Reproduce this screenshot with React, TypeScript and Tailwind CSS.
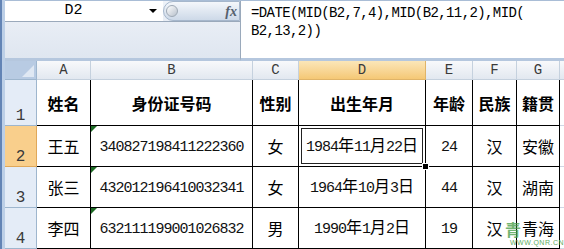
import React from "react";

const header = ["姓名", "身份证号码", "性别", "出生年月", "年龄", "民族", "籍贯"];
const rows = [
  ["王五", "340827198411222360", "女", "1984年11月22日", "24", "汉", "安徽"],
  ["张三", "432012196410032341", "女", "1964年10月3日", "44", "汉", "湖南"],
  ["李四", "632111199001026832", "男", "1990年1月2日", "19", "汉", "青海"],
];
const letters = ["A", "B", "C", "D", "E", "F", "G"];

// digits in a narrow mono face, CJK at full width
function Mixed({ text }: { text: string }) {
  const parts = text.split(/([\x00-\x7f]+)/).filter(Boolean);
  return (
    <span className="whitespace-nowrap">
      {parts.map((p, i) =>
        /^[\x00-\x7f]+$/.test(p) ? (
          <span key={i} className="font-['Liberation_Mono',monospace] text-[15px] tracking-[-1px] text-[#111]">
            {p}
          </span>
        ) : (
          <span key={i} className="font-['Noto_Sans_CJK_SC',sans-serif] text-[16px]">
            {p}
          </span>
        )
      )}
    </span>
  );
}

function FormulaBar() {
  return (
    <div className="flex h-[61px] border-t border-[#a9bdd6]">
      <div className="flex w-[235px] flex-col bg-gradient-to-b from-[#eef2f8] to-[#dfe6f0] border-b-[3px] border-[#b5c7de]">
        <div className="flex h-[21px] border-b border-[#9aa9bb]">
          <div className="flex w-[137px] items-center justify-center bg-white font-['Liberation_Mono',monospace] text-[15px] text-black">
            D2
          </div>
          <div className="flex w-[21px] items-center justify-center bg-white">
            <span className="h-0 w-0 border-x-[4px] border-t-[4px] border-x-transparent border-t-black" />
          </div>
          <div className="flex flex-1 items-center rounded-l-full border border-[#a6b7cc] bg-gradient-to-b from-[#f4f7fb] to-[#cdd9e8]">
            <span className="ml-[2px] h-[12px] w-[12px] rounded-full border border-[#9fa9b5] bg-gradient-to-br from-[#ffffff] to-[#b8c1cc]" />
            <span className="ml-auto mr-[2px] font-['Liberation_Serif',serif] text-[14px] italic font-bold text-[#55606e]">
              fx
            </span>
          </div>
        </div>
        <div className="flex-1" />
      </div>
      <div className="flex-1 border-l border-[#9aa9bb] bg-white pl-[10px] pt-[3px] font-['Liberation_Mono',monospace] text-[14px] tracking-[-0.6px] leading-[18px] text-black border-b-[3px] border-b-[#b5c7de]">
        <div>=DATE(MID(B2,7,4),MID(B2,11,2),MID(</div>
        <div>B2,13,2))</div>
      </div>
    </div>
  );
}

export default function App() {
  return (
    <div className="relative flex h-[249px] w-[564px] overflow-hidden bg-white">
      <div className="w-[5px] shrink-0 border-l-[2px] border-[#6384b5] bg-[#bccfe7]" />
      <div className="flex flex-1 flex-col">
        <FormulaBar />
        <div className="grid grid-cols-[32px_54px_162px_46px_127px_47px_44px_43px_1fr] grid-rows-[19px_46px_41px_41px_41px]">
          {/* column headers */}
          <div className="relative border-b border-r border-[#9eb6ce] bg-[#b8cbe3]">
            <span className="absolute bottom-[2px] right-[2px] h-0 w-0 border-l-[12px] border-t-[12px] border-l-transparent border-t-transparent border-b-0 border-r-0 [border-bottom:12px_solid_#dfe8f3]" />
          </div>
          {letters.map((l) => (
            <div
              key={l}
              className={`flex items-center justify-center border-b border-r font-['Liberation_Mono',monospace] text-[14px] text-[#3a3a3a] ${
                l === "D"
                  ? "border-[#e0b468] bg-gradient-to-b from-[#fbe6b8] to-[#f5c875]"
                  : "border-[#c5d1de] bg-gradient-to-b from-[#f8f9fb] to-[#e2e8f0]"
              }`}
            >
              {l}
            </div>
          ))}
          <div className="border-b border-[#c5d1de] bg-gradient-to-b from-[#f8f9fb] to-[#e2e8f0]" />

          {/* row 1 */}
          <div className="flex items-end justify-center border-b border-r border-[#9eb6ce] bg-[#e4ecf7] font-['Liberation_Mono',monospace] text-[16px] leading-[17px] text-[#3a3a3a]">
            1
          </div>
          {header.map((h) => (
            <div
              key={h}
              className="flex items-center justify-center border-b border-r border-black font-['Noto_Sans_CJK_SC',sans-serif] text-[16px] font-bold text-black"
            >
              {h}
            </div>
          ))}
          <div className="border-b border-[#d0d7e5]" />

          {rows.map((r, ri) => (
            <React.Fragment key={ri}>
              <div
                className={`flex items-end justify-center border-b border-r font-['Liberation_Mono',monospace] text-[16px] leading-[17px] text-[#3a3a3a] ${
                  ri === 0
                    ? "border-[#e0a85a] bg-[#f9cf8c]"
                    : "border-[#9eb6ce] bg-[#e4ecf7]"
                }`}
              >
                {ri + 2}
              </div>
              {r.map((c, ci) => (
                <div
                  key={ci}
                  className="relative flex items-center justify-center border-b border-r border-black text-black"
                >
                  {ci === 1 && (
                    <span className="absolute left-0 top-0 h-0 w-0 border-r-[6px] border-t-[6px] border-r-transparent border-t-[#1d6b25]" />
                  )}
                  {ri === 0 && ci === 3 && (
                    <>
                      <span className="absolute -inset-[1px] border border-black" />
                      <span className="absolute inset-[2px] border border-[#222]" />
                      <span className="absolute -bottom-[4px] -right-[4px] z-10 h-[7px] w-[7px] border border-white bg-black" />
                    </>
                  )}
                  <Mixed text={c} />
                </div>
              ))}
              <div className="border-b border-[#d0d7e5]" />
            </React.Fragment>
          ))}
        </div>
      </div>

      {/* watermark */}
      <span className="absolute left-[505px] top-[220px] font-['Noto_Sans_CJK_SC',sans-serif] text-[16px] font-bold leading-[18px] text-[#4ea24e] opacity-80">
        青
      </span>
      <span className="absolute left-[510px] top-[239px] font-['Liberation_Sans',sans-serif] text-[7px] leading-[8px] tracking-[0.5px] text-[#5fae5f]">
        WWW.QNR.CN
      </span>
    </div>
  );
}
